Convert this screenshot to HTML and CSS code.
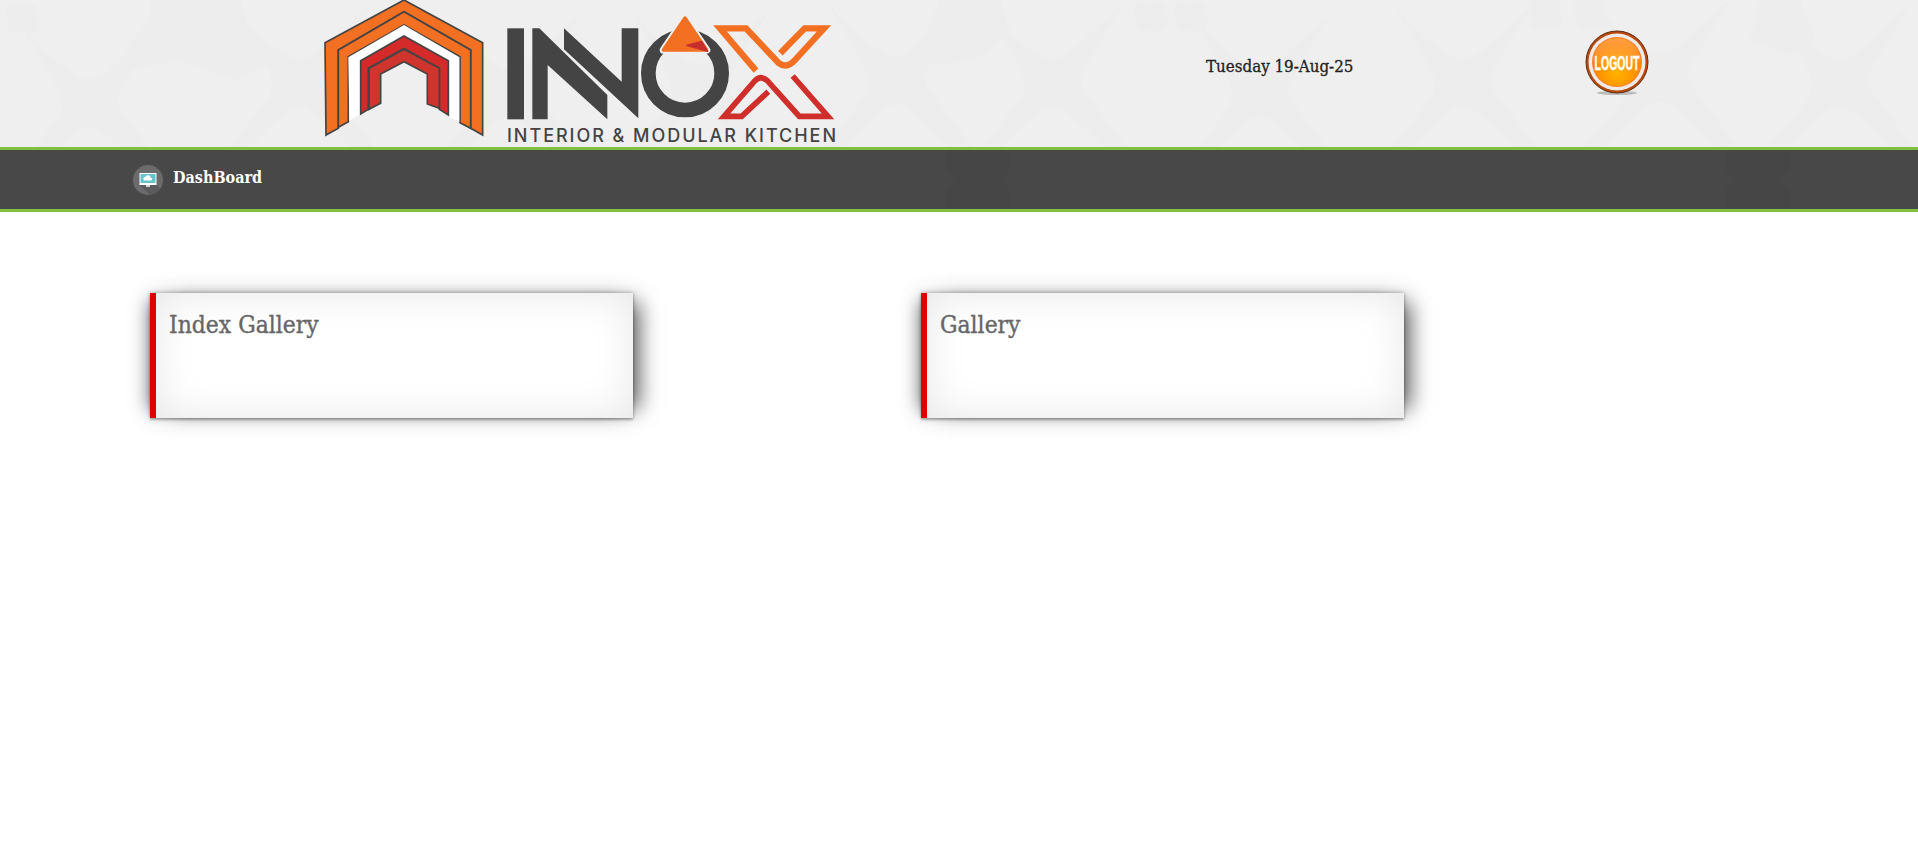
FILE: index.html
```html
<!DOCTYPE html>
<html lang="en">
<head>
<meta charset="utf-8">
<title>Innox DashBoard</title>
<link rel="stylesheet" href="styles.css">
</head>
<body>
<header class="top">
  <svg class="texture" viewBox="0 0 1918 147" preserveAspectRatio="none" aria-hidden="true">
    <defs>
      <path id="star" d="M-70,-75 Q-35,-35 -8,-22 Q5,-18 20,-30 Q40,-50 70,-75 Q45,-35 28,-5 Q25,8 40,22 Q60,50 80,75 L58,75 Q30,45 8,28 Q-2,24 -12,30 Q-35,50 -58,75 L-80,75 Q-50,45 -30,15 Q-25,0 -35,-15 Q-50,-45 -70,-75Z"/>
      <g id="paw"><circle cx="-8" cy="-6" r="9"/><circle cx="8" cy="6" r="10"/><circle cx="-6" cy="8" r="8"/><circle cx="7" cy="-7" r="8"/></g>
    </defs>
    <g class="texture-fill">
      <use href="#star" x="90" y="100"/>
      <use href="#star" x="300" y="80"/>
      <use href="#star" x="510" y="90"/>
      <use href="#star" x="700" y="85"/>
      <use href="#star" x="897" y="78"/>
      <use href="#star" x="1053" y="80"/>
      <use href="#star" x="1260" y="90"/>
      <use href="#star" x="1463" y="80"/>
      <use href="#star" x="1660" y="75"/>
      <use href="#star" x="1840" y="80"/>
      <path d="M150,0 H240 L250,30 L270,65 L235,80 L180,60 L125,70 L128,45 L150,20Z"/>
      <path d="M1000,0 H940 L925,35 L905,62 L950,64 L985,55 L1010,30Z"/>
      <path d="M1760,0 H1800 L1815,40 L1790,55 L1750,40Z"/>
      <use href="#paw" x="22" y="18"/>
      <use href="#paw" x="1150" y="16"/>
      <use href="#paw" x="1190" y="16"/>
      <use href="#paw" x="1545" y="14"/>
      <use href="#paw" x="1590" y="14"/>
    </g>
  </svg>
  <svg class="logo" viewBox="320 0 520 147" role="img" aria-label="Innox Interior &amp; Modular Kitchen">
    <g transform="translate(320 0) scale(.33333)">
      <g class="band">
        <path class="orange" d="M15,128 L252,0 L488,128 V405 L452,385 V150 L252,35 L55,150 V385 L18,405Z"/>
        <path class="orange" d="M55,150 L252,35 L452,150 V385 L420,368 V170 L252,75 L85,170 V365 L55,382Z"/>
        <path class="white" d="M85,172 L252,75 L418,172 V365 L388,350 V182 L252,108 L122,182 V342 L88,362Z"/>
        <path class="red" d="M122,182 L252,108 L385,182 V345 L358,328 V205 L252,145 L145,205 V328 L122,342Z"/>
        <path class="brick" d="M147,205 L252,148 L358,205 V325 L322,312 V222 L252,185 L182,222 V310 L147,328Z"/>
      </g>
    </g>
    <g transform="translate(500 10) scale(.33333)" class="dark">
      <rect x="22" y="55" width="50" height="273"/>
      <path d="M97,328 V55 H118 L322,255 V328 L143,165 V328Z"/>
      <path d="M192,55 L365,215 V55 H415 V325 L192,118Z"/>
    </g>
    <g transform="translate(640 10) scale(.33333)">
      <circle class="ring" cx="135" cy="190" r="110"/>
      <path class="halo" d="M135,24 L200,120 L70,120Z"/>
      <path class="tri" d="M135,24 L200,120 L70,120Z"/>
      <path class="tri-red" d="M140,106 L185,94 L203,124Z"/>
      <path class="x-top" d="M348,182 L240,55 H318 L415,158 Q440,178 465,150 L552,55 H494 L421,130"/>
      <path class="x-bot" d="M385,245 L305,319 H252 L345,212 Q362,195 382,212 L478,319 H564 L458,198"/>
    </g>
    <text class="tagline" x="507" y="142" textLength="329" lengthAdjust="spacing">INTERIOR &amp; MODULAR KITCHEN</text>
  </svg>
  <div class="date">Tuesday 19-Aug-25</div>
  <a class="logout" href="#" aria-label="Logout">
    <svg viewBox="0 0 64 66" width="64" height="66">
      <defs>
        <radialGradient id="glow" cx=".5" cy=".72" r=".6">
          <stop offset="0" stop-color="#ffb400"/>
          <stop offset="1" stop-color="#ff7e00"/>
        </radialGradient>
        <linearGradient id="gloss" x1="0" y1="0" x2="0" y2="1">
          <stop offset="0" stop-color="#fff" stop-opacity=".25"/>
          <stop offset="1" stop-color="#fff" stop-opacity=".08"/>
        </linearGradient>
      </defs>
      <ellipse class="drop" cx="32" cy="63" rx="20" ry="2"/>
      <circle class="rim" cx="32" cy="32" r="31"/>
      <circle class="gap" cx="32" cy="32" r="28.5"/>
      <circle class="inner-line" cx="32" cy="32" r="25"/>
      <circle fill="url(#glow)" cx="32" cy="32" r="24"/>
      <path fill="url(#gloss)" d="M8,32 A24,24 0 0 1 56,32 Q32,38 8,32Z"/>
      <text class="logout-text" transform="translate(32 40) scale(1 2)">LOGOUT</text>
    </svg>
  </a>
</header>
<nav class="bar">
  <svg class="bar-texture" viewBox="0 0 1918 59" preserveAspectRatio="none" aria-hidden="true">
    <g class="bar-fill">
      <path d="M945,0 H1010 V20 L1000,30 L1010,40 V59 H945 V40 L955,30 L945,20Z"/>
      <path d="M1725,0 H1790 V20 L1778,30 L1790,40 V59 H1725 V40 L1737,30 L1725,20Z"/>
    </g>
  </svg>
  <a class="nav-link" href="#">
    <svg class="nav-icon" viewBox="0 0 30 30" width="30" height="30" aria-hidden="true">
      <circle class="ic-bg" cx="15" cy="15" r="15"/>
      <path class="ic-shade" d="M7,9 H23 V19 L27,24 A15,15 0 0 1 17,30 L7,20Z"/>
      <rect class="ic-frame" x="6.5" y="8" width="17" height="12"/>
      <rect class="ic-screen" x="7.5" y="9" width="15" height="9"/>
      <path class="ic-frame" d="M11.5,15.5 a1.8,1.8 0 0 1 .6,-3.5 a3,3 0 0 1 5.6,.4 a1.6,1.6 0 0 1 .4,3.1Z"/>
      <rect class="ic-stand" x="13" y="20" width="4" height="2"/>
    </svg>
    <span>DashBoard</span>
  </a>
</nav>
<main class="cards">
  <section class="card"><h2>Index Gallery</h2></section>
  <section class="card"><h2>Gallery</h2></section>
</main>
</body>
</html>
```
FILE: styles.css
```css
* { box-sizing: border-box; }
html, body { margin: 0; padding: 0; background: #fff; }
body {
  font-family: "DejaVu Serif Condensed", "DejaVu Serif", serif;
  font-stretch: condensed;
  min-height: 862px;
  overflow: hidden;
}
.top {
  position: relative;
  display: flex;
  align-items: flex-start;
  height: 150px;
  padding-left: 320px;
  background: #efefef;
  border-bottom: 3px solid #7fbf41;
}
.texture, .bar-texture {
  position: absolute;
  left: 0;
  top: 0;
  width: 100%;
  height: 100%;
}
.texture-fill { fill: #ededed; }
.logo, .date, .logout { position: relative; }
.logo { width: 520px; height: 147px; flex: none; }
.band path { stroke: #444; stroke-width: 5; stroke-linejoin: miter; }
.orange { fill: #f36f21; }
.white { fill: #fff; stroke: none !important; }
.red { fill: #d42a2a; }
.brick { fill: #cf352c; }
.dark { fill: #444; }
.ring { fill: none; stroke: #444; stroke-width: 44; }
.halo { fill: #efefef; stroke: #efefef; stroke-width: 22; stroke-linejoin: round; }
.tri { fill: #f36f21; stroke: #f36f21; stroke-width: 10; stroke-linejoin: round; }
.tri-red { fill: #c62f2b; stroke: #c62f2b; stroke-width: 4; stroke-linejoin: round; }
.x-top { fill: none; stroke: #f36f21; stroke-width: 19; }
.x-bot { fill: none; stroke: #cf2e2a; stroke-width: 17; }
.tagline {
  font-family: Inter, "Liberation Sans", sans-serif;
  font-size: 18px;
  font-weight: 500;
  fill: #444;
}
.date {
  margin-left: 366px;
  margin-top: 55px;
  font-size: 16.8px;
  line-height: 22px;
  color: #222;
  white-space: nowrap;
  -webkit-text-stroke: .3px #222;
}
.logout {
  display: block;
  flex: none;
  width: 64px;
  height: 66px;
  margin-left: 232px;
  margin-top: 30px;
}
.drop { fill: #9a9a9a; opacity: .6; }
.rim { fill: #b8480c; stroke: #5e3010; stroke-width: 1; }
.gap { fill: #efeae6; }
.inner-line { fill: #ff7a1a; }
.logout-text {
  font-family: "Liberation Sans", Arial, sans-serif;
  font-weight: 700;
  font-size: 10.5px;
  fill: #fff;
  stroke: #fff;
  stroke-width: .2;
  text-anchor: middle;
}
.bar {
  position: relative;
  display: flex;
  align-items: center;
  height: 62px;
  padding-left: 133px;
  background: #484848;
  border-bottom: 3px solid #7fbf41;
}
.bar-fill { fill: #464646; }
.nav-link {
  position: relative;
  display: flex;
  align-items: center;
  gap: 10px;
  color: #fff;
  font-size: 16px;
  font-weight: 700;
  text-decoration: none;
}
.nav-link span { position: relative; top: -2px; }
.nav-icon { display: block; }
.ic-bg { fill: #6b6b6d; }
.ic-shade { fill: #5b5b5d; }
.ic-frame { fill: #fff; }
.ic-screen { fill: #69c3cf; }
.ic-stand { fill: #d5d5d5; }
.cards {
  display: flex;
  gap: 288px;
  padding: 81px 0 0 150px;
}
.card {
  width: 483px;
  height: 125px;
  padding: 17px 0 0 13px;
  background: #fff;
  border-left: 6px solid #e00000;
  box-shadow:
    16px 0 20px -10px rgba(0, 0, 0, .6),
    -10px 0 16px -9px rgba(0, 0, 0, .5),
    0 0 24px rgba(0, 0, 0, .1),
    0 0 4px rgba(0, 0, 0, .3),
    0 2px 2px rgba(0, 0, 0, .2),
    inset 0 0 40px rgba(0, 0, 0, .1);
}
.card h2 {
  margin: 0;
  font-size: 24.4px;
  line-height: 30px;
  font-weight: 400;
  color: #666;
  -webkit-text-stroke: .35px #666;
}
```
